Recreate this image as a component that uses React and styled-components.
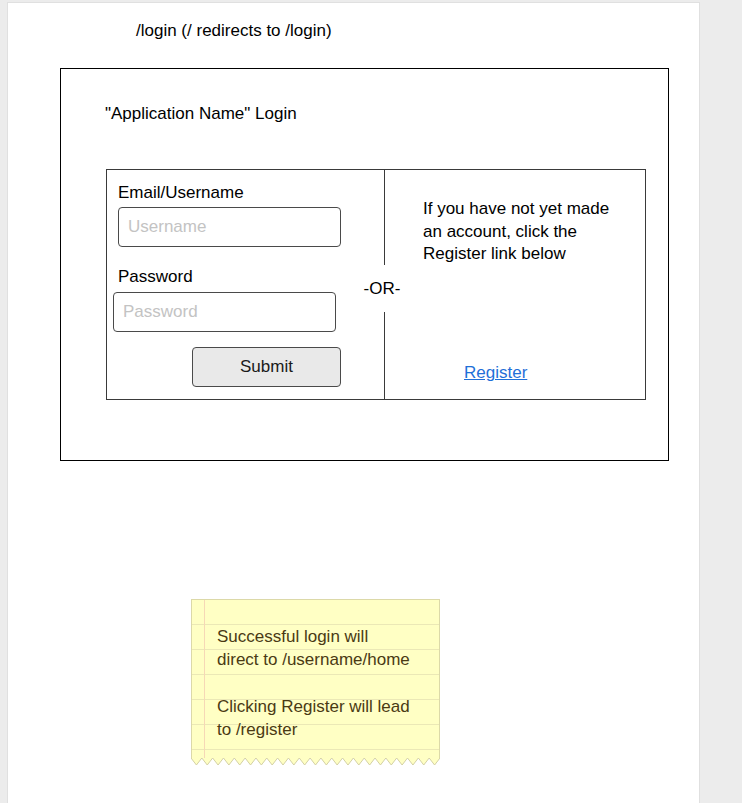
import React from "react";
import styled, { createGlobalStyle } from "styled-components";

const Global = createGlobalStyle`
  html, body { margin: 0; padding: 0; background: #ececec; }
  body { font-family: "Liberation Sans", Arial, sans-serif; font-size: 17px; color: #000; }
  * { box-sizing: border-box; }
`;

const Page = styled.div`
  margin: 2px 0 0 7px;
  width: 693px;
  min-height: 801px;
  background: #fff;
  border: 1px solid #e0e0e0;
  border-bottom: none;
  padding-top: 18px;
`;

const Caption = styled.div`
  padding-left: 128px;
  line-height: 20px;
`;

const Frame = styled.div`
  margin: 27px 0 0 52px;
  width: 609px;
  height: 393px;
  border: 1px solid #000;
  padding: 35px 0 0 44px;
`;

const Title = styled.div`
  line-height: 20px;
`;

const Box = styled.div`
  margin: 45px 0 0 1px;
  width: 540px;
  height: 231px;
  border: 1px solid #3a3a3a;
  display: grid;
  grid-template-columns: 277px 1px 1fr;
`;

const FormCol = styled.div`
  display: flex;
  flex-direction: column;
  align-items: flex-start;
  padding: 13px 0 0 11px;
`;

const Label = styled.div`
  line-height: 20px;
  margin-top: ${(p) => p.$top || 0}px;
`;

const Input = styled.input`
  width: 223px;
  height: 40px;
  margin: ${(p) => p.$top || 0}px 0 0 ${(p) => p.$left || 0}px;
  border: 1px solid #4a4a4a;
  border-radius: 4px;
  padding: 0 0 0 9px;
  font-family: "Liberation Sans", Arial, sans-serif;
  font-size: 17px;
  color: #000;
  background: #fff;
  outline: none;
  &::placeholder { color: #c3c3c3; }
`;

const Button = styled.button`
  width: 149px;
  height: 40px;
  margin: 15px 0 0 74px;
  background: #e9e9e9;
  border: 1px solid #4a4a4a;
  border-radius: 4px;
  font-family: "Liberation Sans", Arial, sans-serif;
  font-size: 17px;
  color: #1a1a1a;
  padding: 0;
`;

const Divider = styled.div`
  display: flex;
  flex-direction: column;
  align-items: center;
`;

const Rule = styled.div`
  width: 1px;
  background: #3a3a3a;
  height: ${(p) => (p.$h ? `${p.$h}px` : "auto")};
  flex: ${(p) => (p.$h ? "none" : "1")};
`;

const OrLabel = styled.div`
  width: max-content;
  height: 47px;
  line-height: 47px;
  margin-left: -5px;
`;

const InfoCol = styled.div`
  display: flex;
  flex-direction: column;
  padding: 28px 0 16px 38px;
`;

const InfoText = styled.p`
  margin: 0;
  line-height: 22.5px;
`;

const RegisterLink = styled.a`
  margin: auto 0 0 41px;
  line-height: 20px;
  color: #1f6fd8;
  text-decoration: underline;
  cursor: pointer;
`;

const Note = styled.div`
  margin: 138px 0 0 183px;
  width: 249px;
`;

const NoteBody = styled.div`
  height: 159px;
  border: 1px solid #dcd9a8;
  border-bottom: none;
  background:
    linear-gradient(to right, transparent 12px, #f6d8b6 12px, #f6d8b6 13px, transparent 13px),
    repeating-linear-gradient(to bottom, transparent 0, transparent 24px, #ebe8b6 24px, #ebe8b6 25px),
    #ffffc4;
  padding: 25px 0 0 25px;
  color: #4a3a14;
`;

const NoteLine = styled.p`
  margin: ${(p) => p.$top || 0}px 0 0;
  line-height: 23px;
`;

const Zigzag = styled.svg`
  display: block;
  width: 249px;
  height: 9px;
`;

function ZigzagEdge() {
  const w = 249;
  const n = 23;
  const p = w / n;
  const pts = ["0,0"];
  for (let i = 0; i < n; i++) {
    pts.push(`${(i * p + p / 2).toFixed(2)},7`);
    pts.push(`${((i + 1) * p).toFixed(2)},0`);
  }
  const edge = pts.join(" ");
  return (
    <Zigzag viewBox="0 0 249 9">
      <polygon points={edge} fill="#ffffc4" />
      <polyline points={`0.5,0 ${edge} 248.5,0`} fill="none" stroke="#d4d1a4" strokeWidth="1" />
    </Zigzag>
  );
}

export default function App() {
  return (
    <>
      <Global />
      <Page>
        <Caption>/login (/ redirects to /login)</Caption>
        <Frame>
          <Title>"Application Name" Login</Title>
          <Box>
            <FormCol>
              <Label>Email/Username</Label>
              <Input $top={4} placeholder="Username" />
              <Label $top={20}>Password</Label>
              <Input $top={5} $left={-5} placeholder="Password" type="password" />
              <Button>Submit</Button>
            </FormCol>
            <Divider>
              <Rule $h={95} />
              <OrLabel>-OR-</OrLabel>
              <Rule />
            </Divider>
            <InfoCol>
              <InfoText>
                If you have not yet made
                <br />
                an account, click the
                <br />
                Register link below
              </InfoText>
              <RegisterLink>Register</RegisterLink>
            </InfoCol>
          </Box>
        </Frame>
        <Note>
          <NoteBody>
            <NoteLine>
              Successful login will
              <br />
              direct to /username/home
            </NoteLine>
            <NoteLine $top={24}>
              Clicking Register will lead
              <br />
              to /register
            </NoteLine>
          </NoteBody>
          <ZigzagEdge />
        </Note>
      </Page>
    </>
  );
}
